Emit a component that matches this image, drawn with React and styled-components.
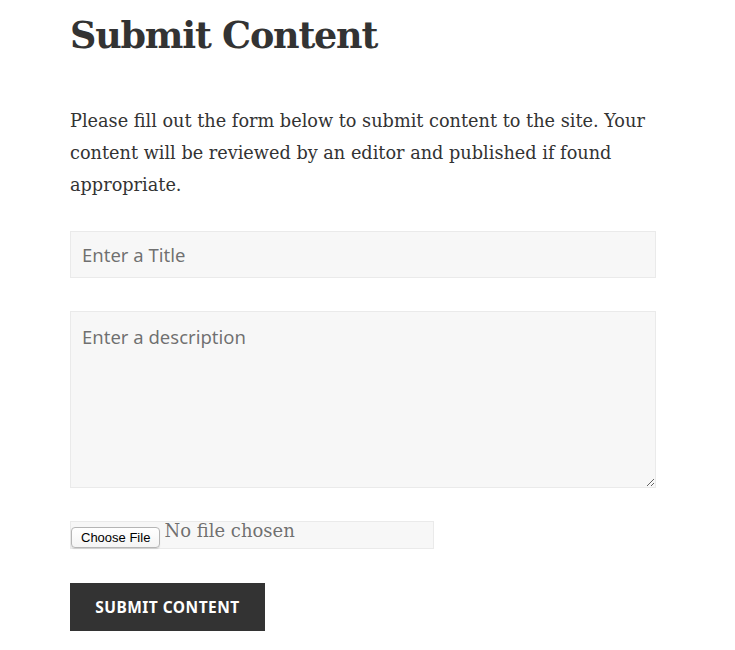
import React from "react";
import styled, { createGlobalStyle } from "styled-components";

const GlobalStyle = createGlobalStyle`
  html, body {
    margin: 0;
    padding: 0;
    background: #ffffff;
  }

  body {
    font-family: "DejaVu Serif", "Liberation Serif", serif;
    color: #333333;
  }
`;

const Page = styled.main`
  width: 586px;
  padding: 0 0 0 70px;
`;

const Title = styled.h2`
  margin: 0;
  padding-top: 11px;
  font-family: "DejaVu Serif", "Liberation Serif", serif;
  font-size: 36.5px;
  font-weight: 700;
  letter-spacing: -1.2px;
  line-height: 50px;
  color: #333333;
`;

const Intro = styled.p`
  margin: 44px 0 0;
  font-size: 17.7px;
  line-height: 32px;
  color: #333333;
`;

const Form = styled.form`
  display: flex;
  flex-direction: column;
  align-items: flex-start;
  margin-top: 30px;
`;

const fieldBase = `
  box-sizing: border-box;
  width: 586px;
  margin: 0;
  border: 1px solid #eaeaea;
  background: #f7f7f7;
  font-family: "Noto Sans", "Open Sans", sans-serif;
  font-size: 18.5px;
  color: #333333;
  outline: none;

  &::placeholder {
    color: rgba(51, 51, 51, 0.7);
    opacity: 1;
  }
`;

const TextInput = styled.input`
  ${fieldBase}
  height: 47px;
  padding: 0 11px;
`;

const TextArea = styled.textarea`
  ${fieldBase}
  height: 177px;
  margin-top: 33px;
  padding: 11px 11px;
  line-height: 27px;
  resize: vertical;
`;

const FileField = styled.label`
  box-sizing: border-box;
  display: flex;
  align-items: center;
  gap: 4px;
  width: 364px;
  height: 28px;
  margin-top: 33px;
  border: 1px solid #eaeaea;
  background: #f7f7f7;
  cursor: pointer;

  input {
    display: none;
  }
`;

const ChooseButton = styled.span`
  box-sizing: border-box;
  display: inline-flex;
  align-items: center;
  height: 21px;
  margin-top: 5px;
  padding: 0 9px;
  border: 1px solid #b5b5b5;
  border-radius: 4px;
  background: linear-gradient(#ffffff, #f4f4f4);
  box-shadow: 0 1px 1px rgba(0, 0, 0, 0.12);
  font-family: "Liberation Sans", Arial, sans-serif;
  font-size: 13px;
  color: #000000;
  white-space: nowrap;
`;

const FileStatus = styled.span`
  margin-top: -9px;
  font-family: "DejaVu Serif", "Liberation Serif", serif;
  font-size: 18px;
  color: rgba(51, 51, 51, 0.7);
  white-space: nowrap;
`;

const SubmitButton = styled.button`
  box-sizing: border-box;
  width: 195px;
  height: 48px;
  margin-top: 34px;
  padding: 0;
  border: 0;
  background: #333333;
  color: #ffffff;
  font-family: "Noto Sans", "Open Sans", sans-serif;
  font-size: 15.5px;
  font-weight: 700;
  letter-spacing: 0.03em;
  text-transform: uppercase;
  cursor: pointer;
`;

export default function App() {
  return (
    <>
      <GlobalStyle />
      <Page>
        <Title>Submit Content</Title>
        <Intro>
          Please fill out the form below to submit content to the site. Your
          content will be reviewed by an editor and published if found
          appropriate.
        </Intro>
        <Form onSubmit={(e) => e.preventDefault()}>
          <TextInput type="text" name="title" placeholder="Enter a Title" />
          <TextArea name="description" placeholder="Enter a description" />
          <FileField>
            <ChooseButton>Choose File</ChooseButton>
            <FileStatus>No file chosen</FileStatus>
            <input type="file" name="file" />
          </FileField>
          <SubmitButton type="submit">Submit Content</SubmitButton>
        </Form>
      </Page>
    </>
  );
}
